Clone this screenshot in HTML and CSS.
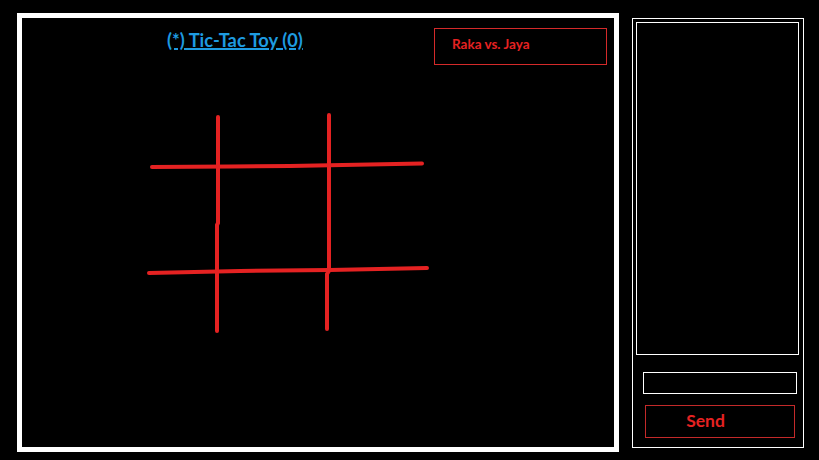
FILE: index.html
```html
<!DOCTYPE html>
<html>
<head>
<meta charset="utf-8">
<link rel="stylesheet" href="styles.css">
</head>
<body>
<div class="page">
  <main class="game">
    <div class="header">
      <a class="title" href="#">(*) Tic-Tac Toy (0)</a>
      <div class="players">Raka vs. Jaya</div>
    </div>
    <svg class="board" width="300" height="235" viewBox="0 0 300 235">
      <g stroke="#e52222" stroke-width="4" stroke-linecap="round" fill="none">
        <polyline points="78,11 78,117 77,119 77,225"/>
        <polyline points="189,9 189,165 187,168 187,223"/>
        <polyline points="12,61 90,60.5 150,60 282,57.5"/>
        <polyline points="9,167 100,165 190,164 287,162"/>
      </g>
    </svg>
  </main>
  <aside class="chat">
    <div class="messages"></div>
    <input class="msg-input" type="text">
    <button class="send">Send</button>
  </aside>
</div>
</body>
</html>
```
FILE: styles.css
```css
html, body {
  margin: 0;
  padding: 0;
  background: #000;
}
body {
  width: 819px;
  height: 460px;
  overflow: hidden;
  font-family: Lato, "Open Sans", sans-serif;
}
.page {
  display: flex;
  align-items: flex-start;
  padding: 13px 0 0 17px;
  gap: 13px;
}
.game {
  box-sizing: border-box;
  width: 602px;
  height: 439px;
  border: 5px solid #fff;
  background: #000;
  display: flex;
  flex-direction: column;
}
.header {
  display: flex;
  justify-content: space-between;
  align-items: flex-start;
  padding: 10px 7px 0 0;
}
.title {
  margin-left: 145px;
  margin-top: 1px;
  color: #1e9be0;
  font-weight: 700;
  font-size: 18.3px;
  line-height: 22px;
  text-decoration: underline;
  text-decoration-thickness: 2px;
  text-underline-offset: 1px;
}
.players {
  box-sizing: border-box;
  width: 173px;
  height: 37px;
  border: 1px solid #d42a2a;
  color: #e52222;
  font-weight: 700;
  font-size: 13.5px;
  line-height: 16px;
  padding: 7px 0 0 17px;
}
.board {
  display: block;
  margin: 41px 0 0 118px;
}
.chat {
  box-sizing: border-box;
  margin-top: 5px;
  width: 172px;
  height: 430px;
  border: 1px solid #fff;
  padding: 3px 5px 0 3px;
  display: flex;
  flex-direction: column;
  align-items: flex-start;
}
.messages {
  box-sizing: border-box;
  width: 163px;
  height: 333px;
  border: 1px solid #fff;
}
.msg-input {
  box-sizing: border-box;
  width: 154px;
  height: 22px;
  margin: 17px 0 0 7px;
  border: 1px solid #fff;
  background: #000;
  outline: none;
  padding: 0;
}
.send {
  box-sizing: border-box;
  width: 150px;
  height: 33px;
  margin: 11px 0 0 9px;
  border: 1px solid #c42a2a;
  background: #000;
  color: #e52222;
  font-family: Lato, "Open Sans", sans-serif;
  font-weight: 700;
  font-size: 17.5px;
  padding: 0 29px 2px 0;
  text-align: center;
}
```
